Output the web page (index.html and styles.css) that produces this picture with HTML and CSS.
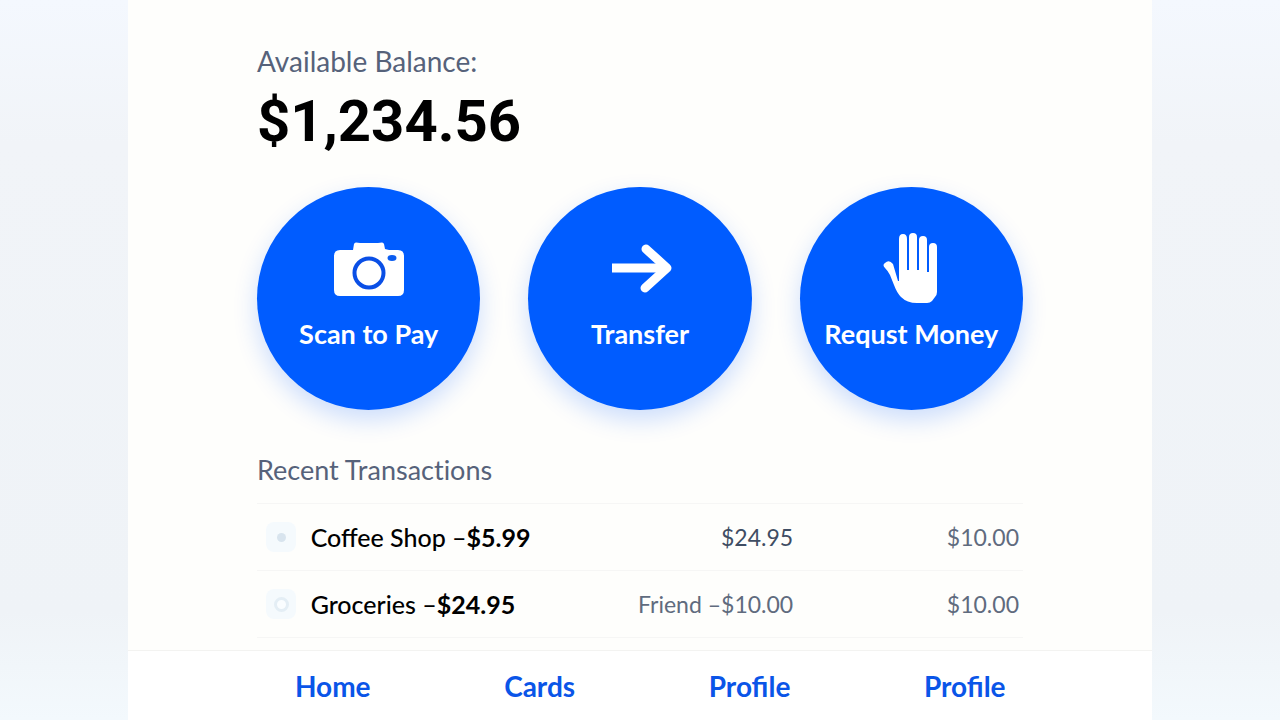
FILE: index.html
```html
<!DOCTYPE html>
<html lang="en">
<head>
<meta charset="utf-8">
<meta name="viewport" content="width=device-width, initial-scale=1">
<title>Wallet</title>
<link rel="stylesheet" href="styles.css">
</head>
<body>
<div class="app">
  <main class="content">
    <section class="balance">
      <h1 class="label">Available Balance:</h1>
      <p class="amount">$1,234.56</p>
    </section>

    <section class="actions">
      <button class="action" type="button">
        <svg class="action-icon" viewBox="0 0 80 80" aria-hidden="true">
          <path fill="#fff" d="M11 22h13l1-6q.5-1.500 2-1.500l4 .5h18l4-.5q1.500 0 2 1.500l1 5 4 1h9q6 0 6 6v34q0 6-6 6H11q-6 0-6-6V28q0-6 6-6z"/>
          <circle cx="40" cy="45" r="14.500" fill="#fff" stroke="#0a4fe6" stroke-width="4"/>
          <ellipse cx="63" cy="30" rx="4.500" ry="3" fill="#0a5cf0"/>
        </svg>
        <span>Scan to Pay</span>
      </button>
      <button class="action" type="button">
        <svg class="action-icon" viewBox="0 0 80 80" aria-hidden="true">
          <path fill="none" stroke="#fff" stroke-width="9" stroke-linejoin="round" d="M12 40h54"/>
          <path fill="none" stroke="#fff" stroke-width="9" stroke-linecap="round" stroke-linejoin="round" d="M46 21l21 19-22 20"/>
        </svg>
        <span>Transfer</span>
      </button>
      <button class="action" type="button">
        <svg class="action-icon" viewBox="0 0 80 80" aria-hidden="true">
          <path fill="#fff" d="M28 53V11q0-5 4-5t4 5v31h2V9q0-4 4-4t4 4v33h2V12q0-4 4-4t4 4v32h2V19q0-4 4-4t4 4v45q0 3-2 5l-3 4q-2 2-5 2H46q-10 0-16-6-4-4-7-12l-4-10q-2-4-5-7-3-3 0-5 4-4 8 1l5 17z"/>
        </svg>
        <span>Requst Money</span>
      </button>
    </section>

    <section class="recent">
      <h2 class="label recent-label">Recent Transactions</h2>
      <table class="transactions">
        <tbody>
          <tr>
            <td class="marker"><span class="tile"><span class="dot"></span></span></td>
            <td class="name">Coffee Shop –<b>$5.99</b></td>
            <td class="detail dark">$24.95</td>
            <td class="total">$10.00</td>
          </tr>
          <tr>
            <td class="marker"><span class="tile"><span class="dot ring"></span></span></td>
            <td class="name">Groceries –<b>$24.95</b></td>
            <td class="detail">Friend –$10.00</td>
            <td class="total">$10.00</td>
          </tr>
        </tbody>
      </table>
    </section>
  </main>

  <nav class="tabs">
    <a href="#home">Home</a>
    <a href="#cards">Cards</a>
    <a href="#profile">Profile</a>
    <a href="#account">Profile</a>
  </nav>
</div>
</body>
</html>
```
FILE: styles.css
```css
* {
  box-sizing: border-box;
}

body {
  margin: 0;
  min-height: 100vh;
  background: linear-gradient(#f4f8fe 0%, #f1f4f8 20%, #eff3f7 85%, #f3f9fd 100%);
  font-family: Lato, "Liberation Sans", sans-serif;
  color: #000;
}

.app {
  display: flex;
  flex-direction: column;
  width: 80%;
  min-height: 100vh;
  margin: 0 auto;
  background: #fefefc;
}

.content {
  flex: 1;
  padding: 43px 12.6% 0;
}

.label {
  margin: 0;
  font-size: 28px;
  font-weight: 400;
  line-height: 36px;
  color: #56627a;
}

.recent-label {
  font-size: 27px;
  font-variant-ligatures: none;
}

.amount {
  margin: 6px 0 0;
  font-family: Roboto, "Liberation Sans", sans-serif;
  font-size: 58px;
  font-weight: 700;
  line-height: 72px;
}

.actions {
  display: grid;
  grid-template-columns: repeat(3, 1fr);
  gap: 48px;
  margin-top: 30px;
}

.action {
  display: flex;
  flex-direction: column;
  align-items: center;
  aspect-ratio: 1;
  padding: 41px 0 0;
  border: 0;
  border-radius: 50%;
  background: #005cff;
  box-shadow: 0 10px 24px rgba(0, 92, 255, 0.2);
  color: #fff;
  font: 700 27px/32px Lato, "Liberation Sans", sans-serif;
  white-space: nowrap;
  cursor: pointer;
}

.action-icon {
  width: 80px;
  height: 80px;
  margin-bottom: 10px;
}

.recent {
  margin-top: 42px;
}

.transactions {
  width: 100%;
  margin-top: 15px;
  border-collapse: collapse;
  table-layout: fixed;
  font-size: 25px;
  line-height: 32px;
  white-space: nowrap;
}

.transactions tr {
  height: 67px;
  border-top: 1px solid #f6f6f5;
  border-bottom: 1px solid #f6f6f5;
}

.transactions td {
  padding: 0;
}

.marker {
  width: 7%;
}

.name {
  width: 40%;
  font-weight: 500;
}

.detail,
.total {
  color: #606b7e;
  font-size: 23px;
  text-align: right;
}

.detail {
  width: 23%;
}

.transactions .total {
  padding-right: 4px;
}

.dark {
  color: #3f4d63;
}

.tile {
  display: grid;
  place-items: center;
  width: 30px;
  height: 30px;
  margin-left: 9px;
  border-radius: 8px;
  background: #f5fafd;
}

.dot {
  width: 9px;
  height: 9px;
  border-radius: 50%;
  background: #d8e4ee;
}

.ring {
  width: 15px;
  height: 15px;
  border: 3px solid #e4eef5;
  background: #fafdff;
}

.tabs {
  display: flex;
  justify-content: space-between;
  padding: 18px 14.3% 16px 16.3%;
  border-top: 1px solid #f3f3f1;
  background: #fff;
}

.tabs a {
  color: #0a55e8;
  font-size: 28px;
  font-weight: 700;
  line-height: 35px;
  text-decoration: none;
}
```
